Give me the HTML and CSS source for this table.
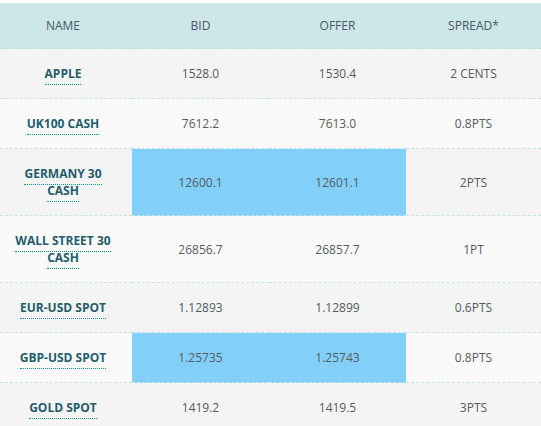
FILE: index.html
```html
<!DOCTYPE html>
<html>
<head>
<meta charset="utf-8">
<link rel="stylesheet" href="styles.css">
</head>
<body>
<div class="wrap">
<table class="prices">
  <colgroup><col class="c-name"><col class="c-bid"><col class="c-offer"><col class="c-spread"></colgroup>
  <thead>
    <tr><th>NAME</th><th>BID</th><th>OFFER</th><th>SPREAD*</th></tr>
  </thead>
  <tbody>
    <tr class="odd"><td><span class="name">APPLE</span></td><td>1528.0</td><td>1530.4</td><td>2 CENTS</td></tr>
    <tr class="even"><td><span class="name">UK100 CASH</span></td><td>7612.2</td><td>7613.0</td><td>0.8PTS</td></tr>
    <tr class="odd"><td><span class="name">GERMANY 30 CASH</span></td><td class="hl">12600.1</td><td class="hl">12601.1</td><td>2PTS</td></tr>
    <tr class="even"><td><span class="name">WALL STREET 30 CASH</span></td><td>26856.7</td><td>26857.7</td><td>1PT</td></tr>
    <tr class="odd"><td><span class="name">EUR-USD SPOT</span></td><td>1.12893</td><td>1.12899</td><td>0.6PTS</td></tr>
    <tr class="even"><td><span class="name">GBP-USD SPOT</span></td><td class="hl">1.25735</td><td class="hl">1.25743</td><td>0.8PTS</td></tr>
    <tr class="odd"><td><span class="name">GOLD SPOT</span></td><td>1419.2</td><td>1419.5</td><td>3PTS</td></tr>
  </tbody>
</table>
</div>
</body>
</html>
```

FILE: styles.css
```css
html, body {
  margin: 0;
  padding: 0;
  background: #ffffff;
}
.wrap {
  padding-top: 3px;
}
.prices {
  width: 541px;
  border-collapse: collapse;
  table-layout: fixed;
  font-family: "Open Sans", sans-serif;
  font-size: 12px;
  line-height: 17px;
  color: #555a60;
}
.c-name { width: 132px; }
.c-bid { width: 137px; }
.c-offer { width: 137px; }
.c-spread { width: 135px; }
.prices th {
  background: #cde7e8;
  font-weight: normal;
  color: #4a5669;
  padding: 14px 10px;
  text-align: center;
  border-bottom: 1px dashed #b9dfe0;
}
.prices th:first-child {
  padding: 14px 18px 14px 12px;
}
.prices td {
  padding: 16px 10px;
  text-align: center;
  vertical-align: middle;
  border-bottom: 1px dashed #c4e4e4;
}
.prices td:first-child {
  padding: 16px 18px 16px 12px;
}
.odd td { background: #f4f4f4; }
.even td { background: #fafafa; }
.prices td.hl { background: #82d0fa; }
.name {
  font-weight: bold;
  color: #1f5d6d;
  border-bottom: 1px dotted #0c9b9b;
  padding-bottom: 2px;
}
```
